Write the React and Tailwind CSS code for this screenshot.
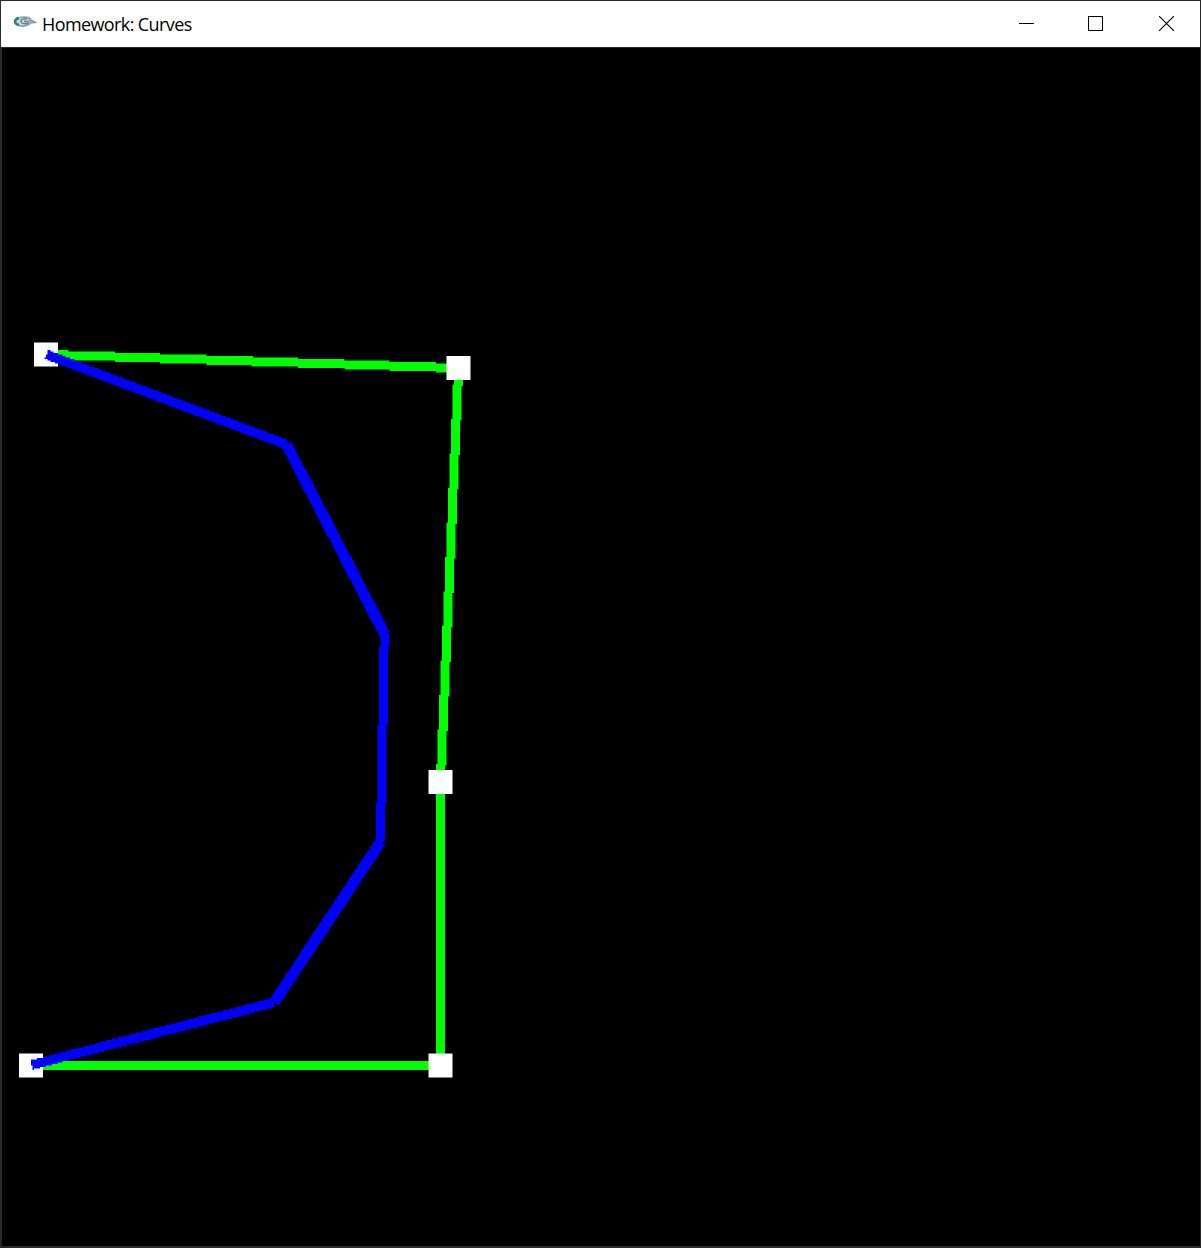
const controlPoints = [
  [46, 354.5],
  [458.5, 368],
  [440.5, 782],
  [440.5, 1065.5],
  [31, 1065.5],
];

const curvePoints = [
  [46.5, 354.5],
  [286.5, 444.5],
  [384.5, 634],
  [380.5, 842],
  [274, 1002.5],
  [31.5, 1065],
];

const curveWidths = [9.5, 11, 9, 11, 9.5];
const CELL = 1.5;
const ORIGIN_X = 1;
const ORIGIN_Y = 47;

// Scan-converts a thick segment onto the coarse pixel grid of the viewport.
function rasterSegment([x1, y1], [x2, y2], width) {
  const length = Math.hypot(x2 - x1, y2 - y1);
  const nx = (-(y2 - y1) / length) * (width / 2);
  const ny = ((x2 - x1) / length) * (width / 2);
  const corners = [
    [x1 + nx, y1 + ny],
    [x2 + nx, y2 + ny],
    [x2 - nx, y2 - ny],
    [x1 - nx, y1 - ny],
  ];
  const ys = corners.map((c) => c[1]);
  const first = Math.floor((Math.min(...ys) - ORIGIN_Y) / CELL);
  const last = Math.ceil((Math.max(...ys) - ORIGIN_Y) / CELL);
  let path = "";
  for (let row = first; row <= last; row++) {
    const y = ORIGIN_Y + (row + 0.5) * CELL;
    const hits = [];
    corners.forEach(([ax, ay], i) => {
      const [bx, by] = corners[(i + 1) % 4];
      if (ay <= y !== by <= y) hits.push(ax + ((y - ay) * (bx - ax)) / (by - ay));
    });
    if (hits.length < 2) continue;
    const left = ORIGIN_X + Math.round((Math.min(...hits) - ORIGIN_X) / CELL) * CELL;
    const right = ORIGIN_X + Math.round((Math.max(...hits) - ORIGIN_X) / CELL) * CELL;
    if (right > left) path += `M${left} ${y - CELL / 2}H${right}V${y + CELL / 2}H${left}Z`;
  }
  return path;
}

function AppIcon() {
  return (
    <svg className="mb-1 h-3 w-6 shrink-0" viewBox="0 0 24 12" fill="none">
      <path d="M4 2.5C7 0 15 0 18 3L23 5.5V7L17 7.5C15 10 11 11 7 10C1 9 0 5 4 2.5Z" fill="#c8d9dd" />
      <path d="M18 3C15 .5 7 .5 4 2.5C0 5 2 9 7 9.8C11 10.5 15 9.5 17 7.5" stroke="#7da0a8" strokeWidth="1.6" />
      <path d="M6 2C.5 3.5 1 8 6 9" stroke="#278087" strokeWidth="2.4" />
      <path d="M14 3C10 2 7.5 3.5 8 5.5C8.3 8 12 8 15 7.5V5.5H11" stroke="#64858e" strokeWidth="1.5" />
      <path d="M16 3L18.5 7.5M17.5 4L22.5 6.5L17 7" stroke="#819fa8" strokeWidth="1.4" />
    </svg>
  );
}

function TitleBar() {
  return (
    <header className="flex h-[46px] shrink-0 items-center bg-white pl-3">
      <AppIcon />
      <h1 className="ml-[5px] whitespace-nowrap font-['Open_Sans','Noto_Sans',sans-serif] text-[18px] leading-6 tracking-[-0.6px] text-black">
        Homework: Curves
      </h1>
      <div className="-mr-px ml-auto flex h-full items-center pb-[2px] text-black">
        <button aria-label="Minimize" className="flex h-full w-[69px] items-center justify-center">
          <svg width="15" height="15" viewBox="0 0 15 15" shapeRendering="crispEdges">
            <path d="M0 7.5H15" stroke="currentColor" />
          </svg>
        </button>
        <button aria-label="Maximize" className="flex h-full w-[69px] items-center justify-center">
          <svg width="15" height="15" viewBox="0 0 15 15" fill="none" shapeRendering="crispEdges">
            <path d="M.5.5H14.5V14.5H.5Z" stroke="currentColor" />
          </svg>
        </button>
        <button aria-label="Close" className="flex h-full w-[71px] items-center justify-center pl-[2px]">
          <svg width="15" height="15" viewBox="0 0 15 15">
            <path d="M0 0L15 15M15 0L0 15" stroke="currentColor" strokeWidth="1.1" />
          </svg>
        </button>
      </div>
    </header>
  );
}

function CurveCanvas() {
  return (
    <svg className="block h-[1199px] w-full bg-black" viewBox="1 48 1199 1199">
      <path d="M1.5 48V1247" stroke="#292929" />
      <path d="M1 1246.5H1200" stroke="#292929" />
      {controlPoints.slice(1).map((point, i) => (
        <path key={i} d={rasterSegment(controlPoints[i], point, 9)} fill="#00ff00" />
      ))}
      {controlPoints.map(([x, y], i) => (
        <rect key={i} x={x - 12} y={y - 12} width="24" height="24" fill="white" />
      ))}
      {curvePoints.slice(1).map((point, i) => (
        <path key={i} d={rasterSegment(curvePoints[i], point, curveWidths[i])} fill="#0000ff" />
      ))}
    </svg>
  );
}

export default function App() {
  return (
    <main className="flex h-[1248px] w-[1201px] flex-col overflow-hidden border border-[#28282b]">
      <TitleBar />
      <div className="h-px shrink-0 bg-[#292929]" />
      <CurveCanvas />
    </main>
  );
}
